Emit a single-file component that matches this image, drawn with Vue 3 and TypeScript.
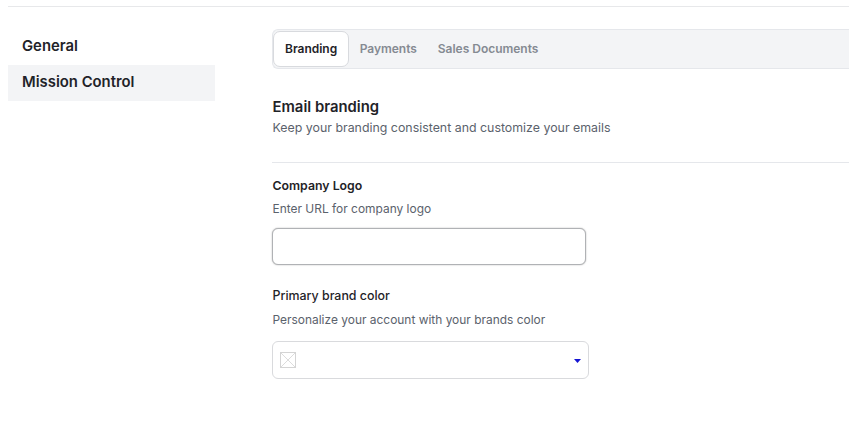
<script setup lang="ts">
const tabs: string[] = ['Payments', 'Sales Documents']
</script>

<template>
  <div class="page">
    <div class="layout">
      <nav class="side">
        <div class="side-item">General</div>
        <div class="side-item active">Mission Control</div>
      </nav>
      <main class="main">
        <div class="tabs">
          <div class="tab current">Branding</div>
          <div v-for="t in tabs" :key="t" class="tab">{{ t }}</div>
        </div>
        <section class="head">
          <h2>Email branding</h2>
          <p>Keep your branding consistent and customize your emails</p>
        </section>
        <div class="field first">
          <label>Company Logo</label>
          <p>Enter URL for company logo</p>
          <input class="text" type="text" />
        </div>
        <div class="field second">
          <label class="light">Primary brand color</label>
          <p>Personalize your account with your brands color</p>
          <div class="select">
            <svg class="swatch" width="16" height="16" viewBox="0 0 16 16">
              <rect x="0.5" y="0.5" width="15" height="15" fill="none" stroke="#d4d4d4" />
              <path d="M1 1L15 15M15 1L1 15" stroke="#dcdcdc" fill="none" />
            </svg>
            <svg class="caret" width="7" height="4" viewBox="0 0 7 4">
              <path d="M0 0H7L3.5 4Z" fill="#1414d2" />
            </svg>
          </div>
        </div>
      </main>
    </div>
  </div>
</template>

<style>
html, body { margin: 0; background: #fff; overflow: hidden; }
</style>

<style scoped>
.page {
  width: 849px;
  height: 433px;
  box-sizing: border-box;
  padding: 6px 0 0 8px;
  font-family: Inter, "Liberation Sans", sans-serif;
  color: #1f2328;
}
.layout {
  display: flex;
  border-top: 1px solid #e7e8ea;
  padding-top: 22px;
}
.side { width: 207px; flex: none; margin-right: 57px; }
.side-item {
  height: 36px;
  line-height: 34px;
  padding-left: 14px;
  font-size: 14.85px;
  font-weight: 600;
  color: #1f2328;
}
.side-item.active { background: #f3f4f6; }
.main { flex: 1; min-width: 0; }
.tabs {
  display: flex;
  align-items: center;
  height: 40px;
  box-sizing: border-box;
  background: #f3f4f6;
  border: 1px solid #e5e7eb;
  border-right: 0;
  border-radius: 6px 0 0 6px;
  font-size: 12px;
  font-weight: 600;
  color: #858a92;
}
.tab { padding: 0 10.5px; line-height: 36px; letter-spacing: -0.02px; }
.tab.current {
  height: 36px;
  box-sizing: border-box;
  padding: 0 11px;
  line-height: 34px;
  background: #fff;
  color: #1f2328;
  border: 1px solid #d8dade;
  border-radius: 7px;
}
.head { margin-top: 29px; padding-bottom: 26px; border-bottom: 1px solid #e5e7eb; }
h2 { margin: 0; padding-left: 0.5px; font-size: 14.85px; line-height: 18px; font-weight: 600; color: #1f2328; }
p { margin: 0; padding-left: 0.5px; font-size: 11.95px; line-height: 16px; color: #5b626c; }
.head p { margin-top: 4px; font-size: 12.38px; }
.field label { display: block; padding-left: 0.5px; font-size: 12.3px; line-height: 16px; font-weight: 600; color: #1f2328; }
.field label.light { font-size: 12.4px; font-weight: 500; }
.field p { margin-top: 7px; }
.field.first { margin-top: 15px; }
.field.second { margin-top: 23px; }
.field.second p { margin-top: 8px; }
.text {
  display: block;
  width: 314px;
  height: 37px;
  box-sizing: border-box;
  margin-top: 11px;
  border: 1px solid #b0b2b5;
  border-radius: 6px;
  background: #fff;
  box-shadow: 0 0 1.5px rgba(0,0,0,.35);
  outline: none;
}
.select {
  display: flex;
  align-items: center;
  justify-content: space-between;
  width: 317px;
  height: 38px;
  box-sizing: border-box;
  margin-top: 13px;
  padding: 0 7px 0 7px;
  border: 1px solid #d9dadd;
  border-radius: 6px;
  background: #fff;
}
.swatch { display: block; }
.caret { display: block; margin-top: 2px; }
</style>
